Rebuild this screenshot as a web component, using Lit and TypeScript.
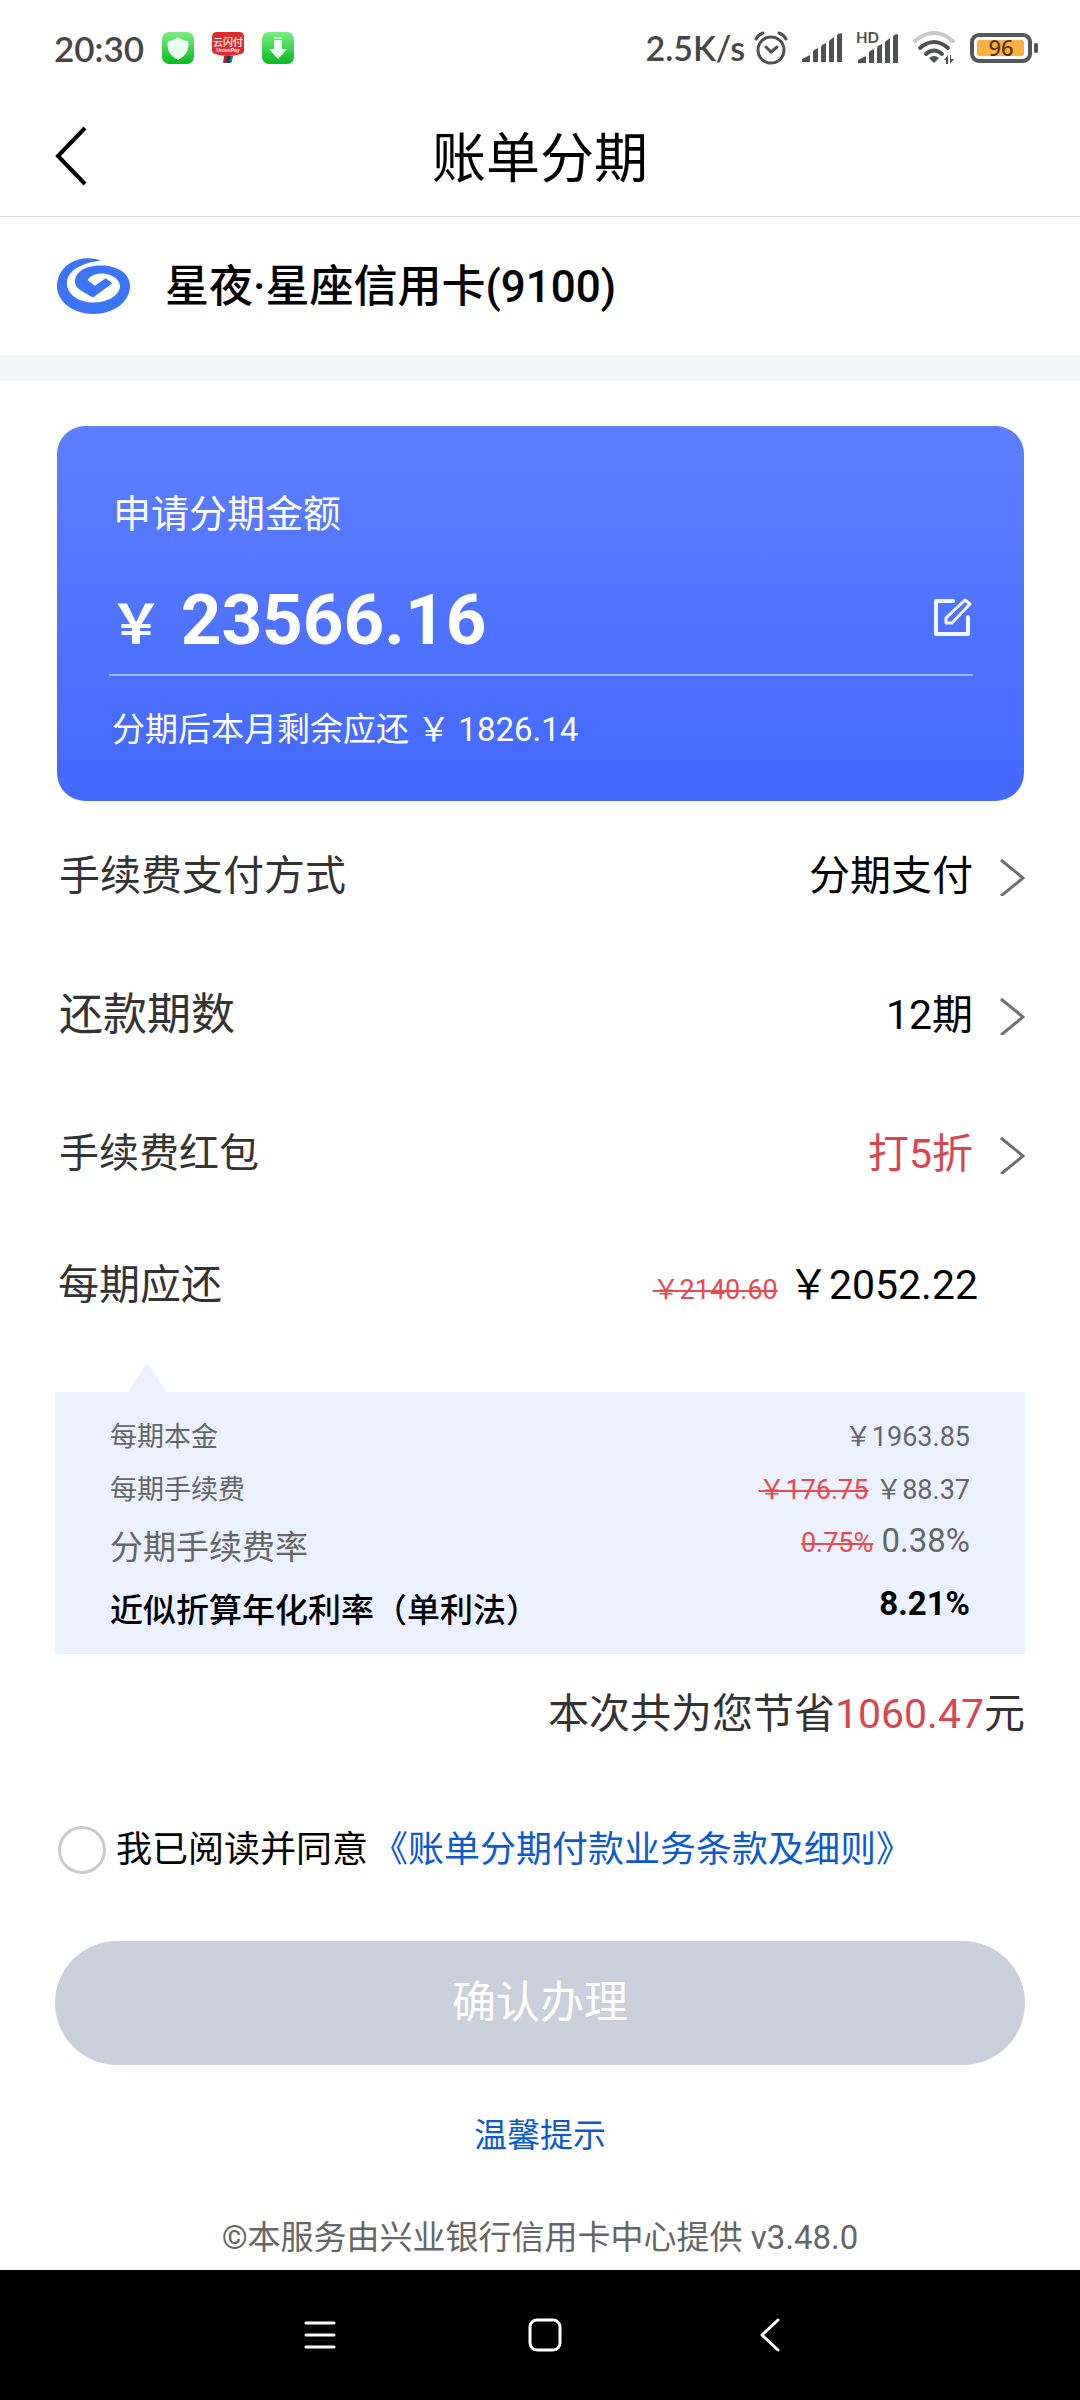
import { LitElement, html, svg, css, nothing } from "lit";
import { customElement, property, state } from "lit/decorators.js";

interface Row {
  label: string;
  value: string;
  size: "small" | "medium" | "large";
  accent?: boolean;
}

interface Detail {
  label: string;
  value: string;
  old?: string;
  kind: "plain" | "rate" | "strong";
}

// Full-width yen sign, as wide as a Chinese character.
const YEN = "\uFFE5";

const ROWS: Row[] = [
  { label: "手续费支付方式", value: "分期支付", size: "medium" },
  { label: "还款期数", value: "12期", size: "large" },
  { label: "手续费红包", value: "打5折", size: "small", accent: true },
];

const DETAILS: Detail[] = [
  { label: "每期本金", value: `${YEN}1963.85`, kind: "plain" },
  { label: "每期手续费", old: `${YEN}176.75`, value: `${YEN}88.37`, kind: "plain" },
  { label: "分期手续费率", old: "0.75%", value: "0.38%", kind: "rate" },
  { label: "近似折算年化利率（单利法）", value: "8.21%", kind: "strong" },
];

const signalBars = svg`
  <path d="M0 29V26L8 22V29Z M11 29V19Q11 18 12 17L16 15V29Z M19 29V15Q19 13 20 12L24 10V29Z M27 29V9Q27 8 28 7L32 4V29Z M35 29V4Q35 2 36 1L40 0V29Z"/>`;

@customElement("status-bar")
export class StatusBar extends LitElement {
  static styles = css`
    :host {
      display: flex;
      justify-content: space-between;
      align-items: center;
      height: 96px;
      padding: 0 42px 0 54px;
      color: #464646;
      fill: #4f5052;
      font: 600 34px/40px Lato, "Noto Sans", sans-serif;
    }
    .side {
      display: flex;
      align-items: center;
    }
    .time {
      font-size: 35px;
    }
    .apps {
      display: flex;
      gap: 18px;
      margin-left: 18px;
    }
    .signs {
      display: flex;
      align-items: center;
      gap: 14px;
      margin-left: 9px;
    }
    svg {
      display: block;
    }
  `;

  render() {
    return html`
      <div class="side">
        <span class="time">20:30</span>
        <div class="apps">
          <svg width="32" height="32" viewBox="0 0 32 32" aria-hidden="true">
            <defs>
              <linearGradient id="g" x1="0" y1="0" x2="0" y2="1">
                <stop offset="0" stop-color="#7bee84" />
                <stop offset="1" stop-color="#06bb1f" />
              </linearGradient>
            </defs>
            <rect width="32" height="32" rx="7" fill="url(#g)" />
            <path d="M16 5C19 7 23 9 26 9C28 17 24 24 16 28C8 24 4 17 6 9C10 9 13 7 16 5Z" fill="#eefcee" />
          </svg>
          <svg width="32" height="32" viewBox="0 0 32 32" aria-hidden="true">
            <path d="M12 24H17L15 31H11Z" fill="#b3202b" />
            <path d="M15 24H21L19 31H14Z" fill="#1d3d5c" />
            <path d="M19 24H21L19 31H17Z" fill="#12808a" />
            <path d="M5 0H27Q32 0 32 5V18Q32 21 29 22Q16 26 3 22Q0 21 0 18V5Q0 0 5 0Z" fill="#e32a2b" />
            <text x="16" y="14" text-anchor="middle" font-family="Noto Sans CJK SC, sans-serif" font-size="10" font-weight="500" fill="#fff">云闪付</text>
            <text x="16" y="20" text-anchor="middle" font-family="Liberation Sans, sans-serif" font-size="5" font-weight="700" fill="#fff">UnionPay</text>
          </svg>
          <svg width="32" height="32" viewBox="0 0 32 32" aria-hidden="true">
            <defs>
              <linearGradient id="h" x1="0" y1="0" x2="0" y2="1">
                <stop offset="0" stop-color="#7bee84" />
                <stop offset="1" stop-color="#06bb1f" />
              </linearGradient>
            </defs>
            <rect width="32" height="32" rx="7" fill="url(#h)" />
            <path d="M12 5H20V7H12Z" fill="#b5f3b9" />
            <path d="M12 8H20V17H25L16 27L7 17H12Z" fill="#f1fdf1" />
          </svg>
        </div>
      </div>
      <div class="side">
        <span>2.5K/s</span>
        <div class="signs">
          <svg width="34" height="34" viewBox="0 0 34 34" aria-hidden="true">
            <g fill="none" stroke="#4f5052" stroke-width="3" stroke-linecap="round" stroke-linejoin="round">
              <circle cx="17" cy="19" r="13" />
              <path d="M12 16L17 21L23 16M2 8Q4 4 9 2M32 8Q30 4 25 2" />
            </g>
          </svg>
          <svg width="40" height="30" viewBox="0 0 40 30" aria-hidden="true">${signalBars}</svg>
          <svg width="42" height="46" viewBox="0 -6 42 46" aria-hidden="true">
            <g transform="translate(2 3)">${signalBars}</g>
            <path d="M0 0H23V12L16 16H0Z" fill="#fff" />
            <text x="0" y="12" font-family="Lato, sans-serif" font-size="15" font-weight="700">HD</text>
          </svg>
          <svg width="44" height="34" viewBox="0 0 44 34" aria-hidden="true">
            <g fill="none" stroke-width="4" stroke-linecap="round">
              <path d="M3 10Q22 -6 41 10" stroke="#c9c9c9" />
              <path d="M8 17Q22 5 36 17" stroke="#4f5052" />
              <path d="M14 23Q22 16 30 23" stroke="#4f5052" />
            </g>
            <path d="M17 27Q22 23 27 27L22 32Z M32 29L36 24V33H34V29Z M38 24H39V28H42L38 33Z" />
          </svg>
          <svg width="68" height="30" viewBox="0 0 68 30" aria-hidden="true">
            <rect x="2" y="2" width="58" height="26" rx="7" fill="#fff" stroke="#55565a" stroke-width="4" />
            <rect x="7" y="7" width="47" height="16" rx="2" fill="#fbb23f" />
            <rect x="64" y="10" width="4" height="10" rx="2" />
            <text x="31" y="23" text-anchor="middle" font-family="Noto Sans, sans-serif" font-size="22" font-weight="500" fill="#5c3409">96</text>
          </svg>
        </div>
      </div>
    `;
  }
}

@customElement("option-row")
export class OptionRow extends LitElement {
  @property({ attribute: false }) row!: Row;

  static styles = css`
    :host {
      display: block;
    }
    .row {
      display: flex;
      align-items: center;
      width: 100%;
      padding: 40px 0 39px 4px;
      border: 0;
      background: none;
      color: #000;
      font: inherit;
      line-height: 60px;
      text-align: left;
      cursor: pointer;
    }
    .label {
      flex: 1;
      color: #333;
    }
    .small {
      font-size: 40px;
    }
    .medium {
      font-size: 41px;
    }
    .large {
      font-size: 44px;
    }
    .value {
      font-size: 41px;
      margin-right: 27px;
    }
    .accent {
      color: #da444e;
    }
  `;

  render() {
    const { label, value, size, accent } = this.row;
    return html`
      <button class="row" type="button">
        <span class="label ${size}">${label}</span>
        <span class="value ${accent ? "accent" : ""}">${value}</span>
        <svg width="25" height="40" viewBox="0 0 25 40" fill="none" stroke="#6f6f6f" stroke-width="3" aria-hidden="true">
          <path d="M1 4L23 22L1 40" />
        </svg>
      </button>
    `;
  }
}

@customElement("app-root")
export class AppRoot extends LitElement {
  @state() private agreed = false;

  static styles = css`
    :host {
      display: block;
      background: #fff;
      color: #000;
      font-family: Roboto, "Noto Sans CJK SC", sans-serif;
    }
    * {
      box-sizing: border-box;
    }
    svg {
      display: block;
    }
    h1,
    h2,
    p,
    dl,
    dd {
      margin: 0;
    }
    button {
      font-family: inherit;
      cursor: pointer;
    }
    a {
      color: #0b5bd0;
      text-decoration: none;
    }
    del {
      color: #e84a50;
      font-size: 27px;
      line-height: 1;
      text-decoration-thickness: 2px;
    }
    .bar {
      display: grid;
      grid-template-columns: 1fr auto 1fr;
      align-items: center;
      height: 121px;
      padding: 0 54px;
      border-bottom: 1px solid #dedede;
    }
    .back {
      justify-self: start;
      padding: 0;
      border: 0;
      background: none;
    }
    .title {
      padding-top: 8px;
      font-size: 54px;
      font-weight: 400;
      line-height: 64px;
    }
    .account {
      display: flex;
      align-items: center;
      gap: 35px;
      padding: 38px 57px;
      border-bottom: 26px solid #f2f4f8;
    }
    .name {
      padding-top: 2px;
      font-size: 44px;
      font-weight: 500;
      line-height: 60px;
    }
    .main {
      padding: 45px 55px 0;
    }
    .card {
      margin: 0 1px 0 2px;
      padding: 64px 51px 47px 52px;
      border-radius: 28px;
      background: linear-gradient(#5d7fff, #4268ff);
      color: #fff;
    }
    .card-label {
      padding-left: 4px;
      font-size: 38px;
      line-height: 48px;
    }
    .amount {
      display: flex;
      align-items: center;
      justify-content: space-between;
      margin-top: 40px;
      padding-bottom: 12px;
      border-bottom: 2px solid #a3b6fb;
      line-height: 84px;
    }
    .money {
      font-size: 71px;
      font-weight: 700;
    }
    .yen {
      font-size: 54px;
      line-height: 1;
    }
    .edit {
      padding: 0 0 6px;
      border: 0;
      background: none;
    }
    .card-note {
      margin-top: 30px;
      padding-left: 3px;
      font-size: 33px;
      line-height: 48px;
    }
    .rows {
      padding-top: 5px;
    }
    .due {
      display: flex;
      justify-content: space-between;
      padding: 32px 47px 30px 3px;
      font-size: 41px;
      line-height: 60px;
    }
    .due-label {
      color: #333;
    }
    .notch {
      display: block;
      margin: 17px 0 0 73px;
    }
    .details {
      display: grid;
      gap: 3px;
      padding: 20px 55px 13px;
      background: #ebf1fe;
      color: #666;
    }
    .detail {
      display: flex;
      justify-content: space-between;
      align-items: flex-start;
      font-size: 27px;
      line-height: 50px;
    }
    .rate,
    .strong {
      font-size: 33px;
      line-height: 60px;
    }
    .rate dd,
    .strong dd {
      line-height: 46px;
    }
    .strong {
      color: #000;
      font-weight: 500;
    }
    .strong dd {
      font-weight: 700;
    }
    .saving {
      margin-top: 30px;
      color: #333;
      font-size: 41px;
      line-height: 60px;
      text-align: right;
    }
    .saved {
      color: #da444e;
    }
    .agree {
      display: flex;
      align-items: center;
      margin-top: 81px;
      padding-left: 3px;
      font-size: 36px;
      line-height: 50px;
    }
    .check {
      appearance: none;
      width: 48px;
      height: 48px;
      margin: 0 10px 0 0;
      border: 3px solid #cbcbcb;
      border-radius: 50%;
    }
    .check:checked {
      background: #4268ff;
    }
    .terms {
      margin-left: 4px;
    }
    .submit {
      display: block;
      width: 100%;
      margin-top: 66px;
      padding: 30px;
      border: 0;
      border-radius: 62px;
      background: #cbcedb;
      color: #fff;
      font-size: 44px;
      line-height: 64px;
    }
    .foot {
      display: grid;
      justify-items: center;
      gap: 54px;
      padding: 47px 0 8px;
      color: #666;
      font-size: 33px;
      line-height: 48px;
    }
    .nav {
      display: flex;
      align-items: center;
      justify-content: space-between;
      height: 130px;
      padding: 0 27% 0 28%;
      background: #000;
    }
    .key {
      padding: 0;
      border: 0;
      background: none;
    }
  `;

  render() {
    return html`
      <status-bar></status-bar>
      <header class="bar">
        <button class="back" type="button" aria-label="返回">
          <svg width="34" height="60" viewBox="0 0 34 60" fill="none" stroke="#000" stroke-width="4">
            <path d="M31 2L4 30L31 58" />
          </svg>
        </button>
        <h1 class="title">账单分期</h1>
      </header>
      <section class="account">
        <svg width="73" height="56" viewBox="0 0 162 166" preserveAspectRatio="none" aria-hidden="true">
          <path fill="#3b74f6" d="M97 8C80 -2 60 0 50 4C20 14 0 45 0 83C0 130 36 166 81 166C126 166 162 130 162 83C162 46 135 22 97 22C62 22 40 42 40 70C40 85 48 93 60 102L80 117L123 75L108 60L84 82L68 66C74 50 92 44 106 47C130 52 140 70 140 84C138 112 112 132 82 132C48 132 22 108 22 74C22 40 52 14 97 8Z" />
        </svg>
        <h2 class="name">星夜·星座信用卡(9100)</h2>
      </section>
      <main class="main">
        <section class="card">
          <p class="card-label">申请分期金额</p>
          <div class="amount">
            <span class="money"><span class="yen">${YEN}</span> 23566.16</span>
            <button class="edit" type="button" aria-label="修改金额">
              <svg width="40" height="40" viewBox="0 0 40 40" fill="none" stroke="#f2f6ff" stroke-width="4" stroke-linecap="round" stroke-linejoin="round">
                <path d="M20 4H3V37H35V20" />
                <path d="M13 26V21L32 3L37 7L19 26Z" stroke-width="3" />
              </svg>
            </button>
          </div>
          <p class="card-note">分期后本月剩余应还 ${YEN} 1826.14</p>
        </section>
        <section class="rows">
          ${ROWS.map((row) => html`<option-row .row=${row}></option-row>`)}
          <div class="due">
            <span class="due-label">每期应还</span>
            <span><del>${YEN}2140.60</del> ${YEN}2052.22</span>
          </div>
        </section>
        <svg class="notch" width="39" height="30" viewBox="0 0 39 30" aria-hidden="true">
          <path d="M0 30L19 0L39 30Z" fill="#ecf0fe" />
        </svg>
        <dl class="details">
          ${DETAILS.map(
            (d) => html`
              <div class="detail ${d.kind}">
                <dt>${d.label}</dt>
                <dd>${d.old ? html`<del>${d.old}</del> ` : nothing}${d.value}</dd>
              </div>
            `
          )}
        </dl>
        <p class="saving">本次共为您节省<span class="saved">1060.47</span>元</p>
        <div class="agree">
          <input
            class="check"
            id="agree"
            type="checkbox"
            .checked=${this.agreed}
            @change=${(e: Event) => (this.agreed = (e.target as HTMLInputElement).checked)}
          />
          <label for="agree">我已阅读并同意</label>
          <a class="terms" href="#terms">《账单分期付款业务条款及细则》</a>
        </div>
        <button class="submit" type="button">确认办理</button>
      </main>
      <footer class="foot">
        <a href="#tips">温馨提示</a>
        <p>©本服务由兴业银行信用卡中心提供 v3.48.0</p>
      </footer>
      <nav class="nav">
        <button class="key" type="button" aria-label="菜单">
          <svg width="34" height="34" viewBox="0 0 34 34" stroke="#fff" stroke-width="3" stroke-linecap="round">
            <path d="M4 5H32M4 17H32M4 29H32" />
          </svg>
        </button>
        <button class="key" type="button" aria-label="主页">
          <svg width="34" height="34" viewBox="0 0 34 34" fill="none" stroke="#fff" stroke-width="3">
            <rect x="2" y="2" width="30" height="30" rx="7" />
          </svg>
        </button>
        <button class="key" type="button" aria-label="返回上一页">
          <svg width="34" height="34" viewBox="0 0 34 34" fill="none" stroke="#fff" stroke-width="3" stroke-linecap="round" stroke-linejoin="round">
            <path d="M24 2L8 17L24 32" />
          </svg>
        </button>
      </nav>
    `;
  }
}
